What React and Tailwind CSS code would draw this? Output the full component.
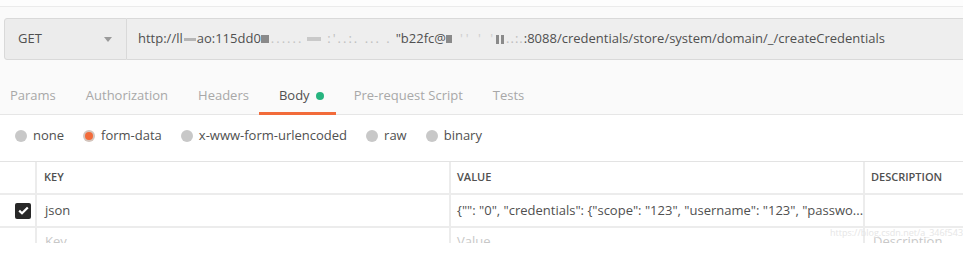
import React from "react";

const tabs = [
  { name: "Params", active: false },
  { name: "Authorization", active: false },
  { name: "Headers", active: false },
  { name: "Body", active: true, dot: true },
  { name: "Pre-request Script", active: false },
  { name: "Tests", active: false },
];

const modes = [
  { name: "none", checked: false },
  { name: "form-data", checked: true },
  { name: "x-www-form-urlencoded", checked: false },
  { name: "raw", checked: false },
  { name: "binary", checked: false },
];

function Radio({ checked }) {
  if (checked) {
    return (
      <span className="flex h-[12px] w-[12px] items-center justify-center rounded-full bg-[#d4c5bd]">
        <span className="h-[8px] w-[8px] rounded-full bg-[#f26b3a]" />
      </span>
    );
  }
  return <span className="h-[12px] w-[12px] rounded-full bg-[#c8c8c8]" />;
}

export default function App() {
  return (
    <div className="h-[256px] w-[963px] overflow-hidden bg-white font-['Open_Sans',sans-serif] text-[13px] text-[#505050]">
      <div className="h-[6px] bg-[#fdfdfd]" />
      <div className="h-[12px] border-t border-[#ebebeb] bg-[#fafafa]" />

      {/* request url row */}
      <div className="flex h-[42px] bg-[#fafafa] pl-[4px]">
        <div className="flex w-[123px] items-center justify-between rounded-l-[3px] border border-[#d9d9d9] bg-[#ececec] pl-[13px] pr-[14px]">
          <span>GET</span>
          <svg width="8" height="5" viewBox="0 0 8 5">
            <path d="M0 0h8L4 5z" fill="#9a9a9a" />
          </svg>
        </div>
        <div className="flex flex-1 items-center border-y border-[#d9d9d9] bg-[#eeeeee] pl-[11px] whitespace-nowrap">
          <span>http://ll</span>
          <span className="mx-[1px] inline-block h-[3px] w-[12px] bg-[#b5b5b5]" />
          <span>ao:115dd0</span>
          <span className="inline-block h-[8px] w-[8px] bg-[#8a8a8a]" />
          <span className="ml-[2px] tracking-[2px] text-[#c4c4c4]">......</span>
          <span className="ml-[4px] inline-block h-[4px] w-[14px] bg-[#c9c9c9]" />
          <span className="ml-[6px] tracking-[2px] text-[#c0c0c0]">:'..:. ... .</span>
          <span className="ml-[4px]">"b22fc@</span>
          <span className="inline-block h-[8px] w-[6px] bg-[#8a8a8a]" />
          <span className="ml-[8px] tracking-[3px] text-[#cdcdcd]">'' ' '</span>
          <span className="inline-block h-[9px] w-[3px] bg-[#8a8a8a]" />
          <span className="ml-[2px] inline-block h-[9px] w-[3px] bg-[#8a8a8a]" />
          <span className="ml-[2px] tracking-[1px] text-[#bdbdbd]">..:.</span>
          <span>:8088/credentials/store/system/domain/_/createCredentials</span>
        </div>
      </div>

      <div className="h-[18px] bg-[#fafafa]" />

      {/* tabs */}
      <div className="flex h-[37px] items-stretch border-b border-[#e6e6e6] bg-[#fafafa] pl-[10px]">
        {tabs.map((t) => (
          <div
            key={t.name}
            className={
              "relative mr-[30px] flex items-center " +
              (t.active ? "text-[#505050]" : "text-[#a8a8a8]")
            }
          >
            <span>{t.name}</span>
            {t.dot && <span className="ml-[6px] h-[8px] w-[8px] rounded-full bg-[#26b47f]" />}
            {t.active && <span className="absolute bottom-[-1px] left-[-20px] right-[-12px] h-[3px] bg-[#f26b3a]" />}
          </div>
        ))}
      </div>

      {/* body modes */}
      <div className="flex h-[46px] items-center gap-[19px] pb-[5px] pl-[15px]">
        {modes.map((m) => (
          <label key={m.name} className="flex items-center gap-[6px]">
            <Radio checked={m.checked} />
            <span>{m.name}</span>
          </label>
        ))}
      </div>

      {/* params table */}
      <div className="border-t border-[#e3e3e3]">
        <div className="grid h-[33px] grid-cols-[37px_414px_414px_1fr] border-b-2 border-[#ececec] text-[11px] font-semibold">
          <div className="border-r-2 border-[#ececec]" />
          <div className="flex items-center border-r-2 border-[#ececec] pl-[7px]">KEY</div>
          <div className="flex items-center border-r-2 border-[#ececec] pl-[6px]">VALUE</div>
          <div className="flex items-center pl-[6px]">DESCRIPTION</div>
        </div>
        <div className="grid h-[33px] grid-cols-[37px_414px_414px_1fr] border-b-2 border-[#ececec]">
          <div className="flex items-center justify-end border-r-2 border-[#ececec] pr-[4px]">
            <span className="flex h-[16px] w-[16px] items-center justify-center rounded-[2px] bg-[#282828]">
              <svg width="11" height="9" viewBox="0 0 11 9">
                <path d="M1.2 4.6 4 7.3 9.8 1.4" fill="none" stroke="#fff" strokeWidth="2.2" />
              </svg>
            </span>
          </div>
          <div className="flex items-center border-r-2 border-[#ececec] pl-[8px]">json</div>
          <div className="flex items-center whitespace-nowrap border-r-2 border-[#ececec] pl-[6px]">
            {'{"": "0", "credentials": {"scope": "123", "username": "123", "passwo...'}
          </div>
          <div />
        </div>
        <div className="relative grid h-[15px] grid-cols-[37px_414px_414px_1fr] overflow-hidden">
          <div className="border-r-2 border-[#ececec]" />
          <div className="border-r-2 border-[#ececec] pl-[8px] pt-[7px] leading-[13px] text-[#c8c8c8]">Key</div>
          <div className="border-r-2 border-[#ececec] pl-[6px] pt-[7px] leading-[13px] text-[#c8c8c8]">Value</div>
          <div className="pl-[8px] pt-[7px] leading-[13px] text-[#c8c8c8]">Description</div>
          <span className="absolute left-[830px] top-[-2px] text-[9px] text-[#e6e6e6]">https://blog.csdn.net/a_346f543</span>
        </div>
      </div>
    </div>
  );
}
